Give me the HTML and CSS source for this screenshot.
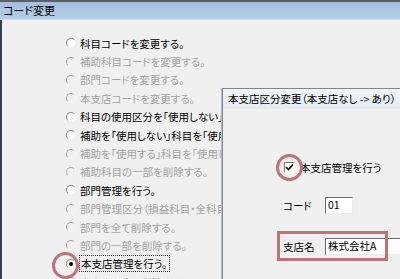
FILE: index.html
```html
<!DOCTYPE html>
<html lang="ja">
<head>
<meta charset="utf-8">
<link rel="stylesheet" href="styles.css">
</head>
<body>
<div class="window">
  <div class="titlebar">コード変更</div>
  <div class="content">
    <ul class="options">
      <li class="opt"><span class="radio"></span><span class="label">科目コードを変更する。</span></li>
      <li class="opt off"><span class="radio"></span><span class="label">補助科目コードを変更する。</span></li>
      <li class="opt off"><span class="radio"></span><span class="label">部門コードを変更する。</span></li>
      <li class="opt off"><span class="radio"></span><span class="label">本支店コードを変更する。</span></li>
      <li class="opt"><span class="radio"></span><span class="label">科目の使用区分を「使用しない」に変更する。</span></li>
      <li class="opt"><span class="radio"></span><span class="label">補助を「使用しない」科目を「使用する」に変更する。</span></li>
      <li class="opt off"><span class="radio"></span><span class="label">補助を「使用する」科目を「使用しない」に変更する。</span></li>
      <li class="opt off"><span class="radio"></span><span class="label">補助科目の一部を削除する。</span></li>
      <li class="opt"><span class="radio"></span><span class="label">部門管理を行う。</span></li>
      <li class="opt off"><span class="radio"></span><span class="label">部門管理区分（損益科目・全科目）を変更する。</span></li>
      <li class="opt off"><span class="radio"></span><span class="label">部門を全て削除する。</span></li>
      <li class="opt off"><span class="radio"></span><span class="label">部門の一部を削除する。</span></li>
      <li class="opt"><span class="radio checked"></span><span class="label focus">本支店管理を行う。</span></li>
      <li class="opt off"><span class="radio"></span><span class="label">本支店を全て削除する。</span></li>
    </ul>
  </div>

  <div class="dialog">
    <div class="dlg-title">本支店区分変更（本支店なし -&gt; あり）</div>
    <div class="dlg-body">
      <div class="check-row">
        <span class="checkbox"><svg width="9" height="9" viewBox="0 0 9 9"><path d="M1 4 L3.5 6.5 L8 1.5" fill="none" stroke="#000" stroke-width="1.6"/></svg></span>
        <span class="check-label">本支店管理を行う</span>
      </div>
      <div class="field">
        <span class="field-label">コード</span>
        <span class="input short">01</span>
      </div>
      <div class="field">
        <span class="field-label">支店名</span>
        <span class="input long">株式会社A</span>
      </div>
    </div>
  </div>

  <div class="mark circle radio-mark"></div>
  <div class="mark circle check-mark"></div>
  <div class="mark rect name-mark"></div>
</div>
</body>
</html>
```

FILE: styles.css
```css
html, body {
  margin: 0;
  padding: 0;
  background: #f0f0f0;
}
body {
  width: 400px;
  height: 279px;
  overflow: hidden;
  font-family: "Noto Sans CJK JP", "DejaVu Sans", sans-serif;
  font-size: 10.5px;
  font-feature-settings: "palt";
  color: #000;
}
.window {
  position: relative;
  width: 400px;
  height: 279px;
  overflow: hidden;
}
.titlebar {
  height: 18px;
  border-top: 2px solid #5b6068;
  background: linear-gradient(#a4c0df, #b7cee8);
  box-shadow: inset 0 -1px 0 #cddcec;
  padding-left: 3px;
  line-height: 17px;
  font-size: 11px;
  color: #000;
}
.content {
  height: 259px;
  border-left: 2px solid #36414e;
  padding-top: 14px;
  box-sizing: border-box;
}
.options {
  list-style: none;
  margin: 0;
  padding: 0 0 0 64px;
  display: flex;
  flex-direction: column;
}
.opt {
  height: 18.4px;
  display: flex;
  align-items: center;
  gap: 4px;
  white-space: nowrap;
}
.opt.off {
  color: #a3a3a3;
}
.radio {
  width: 10px;
  height: 10px;
  box-sizing: border-box;
  border-radius: 50%;
  border: 1px solid;
  border-color: #8c8c8c #f4f4f4 #f4f4f4 #8c8c8c;
  background: #fdfdfd;
  display: flex;
  align-items: center;
  justify-content: center;
  flex: none;
}
.opt.off .radio {
  background: #f0f0f0;
  border-color: #a8a8a8 #f4f4f4 #f4f4f4 #a8a8a8;
}
.radio.checked::after {
  content: "";
  width: 4px;
  height: 4px;
  border-radius: 50%;
  background: #000;
}
.label.focus {
  outline: 1px dotted #333;
  outline-offset: 0;
  padding: 0 2px 0 1px;
}

.dialog {
  position: absolute;
  left: 222px;
  top: 88px;
  width: 220px;
  height: 220px;
  border: 1px solid #7c8793;
  border-right: none;
  background: #f0f0f0;
  box-shadow: -1px 0 0 #b5bcc4;
}
.dlg-title {
  height: 20px;
  line-height: 20px;
  padding-left: 5px;
  background: linear-gradient(#f1f5f9, #e3eaf2);
  white-space: nowrap;
  font-size: 10.5px;
}
.dlg-body {
  padding: 51px 0 0 60px;
  display: flex;
  flex-direction: column;
}
.check-row {
  height: 14px;
  display: flex;
  align-items: center;
  gap: 5px;
  margin-left: 1px;
}
.checkbox {
  width: 11px;
  height: 11px;
  box-sizing: border-box;
  border: 1px solid;
  border-color: #7a7a7a #f8f8f8 #f8f8f8 #7a7a7a;
  background: #fff;
  display: flex;
  align-items: center;
  justify-content: center;
}
.field {
  display: flex;
  align-items: center;
  height: 17px;
}
.check-row + .field {
  margin-top: 23px;
}
.field + .field {
  margin-top: 24px;
}
.field-label {
  width: 42px;
  flex: none;
}
.input {
  height: 17px;
  box-sizing: border-box;
  background: #fff;
  border: 1px solid;
  border-color: #6d6d6d #ececec #ececec #6d6d6d;
  line-height: 14px;
  padding-left: 2px;
  white-space: nowrap;
}
.input.short { width: 28px; }
.input.long { width: 120px; }

.mark {
  position: absolute;
  box-sizing: border-box;
  border: 3px solid #bd7379;
  pointer-events: none;
}
.mark.circle { border-radius: 50%; }
.radio-mark {
  left: 52px;
  top: 252px;
  width: 27px;
  height: 27px;
}
.check-mark {
  left: 276px;
  top: 154px;
  width: 27px;
  height: 27px;
}
.name-mark {
  left: 277px;
  top: 231px;
  width: 111px;
  height: 30px;
}
```
